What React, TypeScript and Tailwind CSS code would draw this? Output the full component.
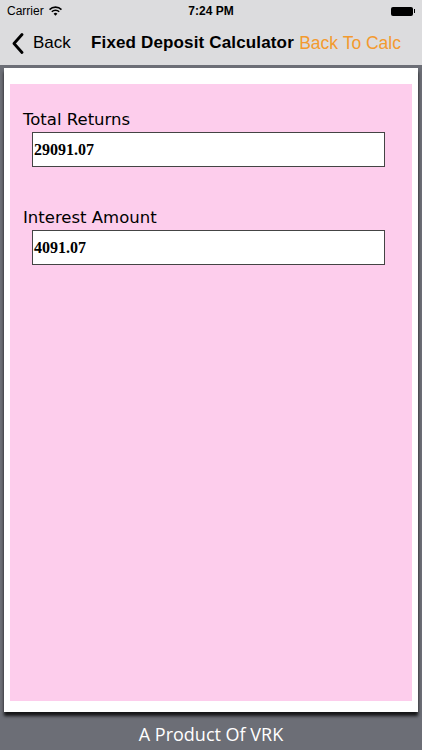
export default function App() {
  return (
    <div className="w-[422px] h-[750px] flex flex-col bg-[#6c6e76] overflow-hidden" style={{ fontFamily: "'Liberation Sans', Arial, sans-serif" }}>
      {/* Status bar + nav */}
      <div className="bg-[#dcdcde] h-[65px] flex flex-col">
        <div className="h-[22px] relative flex items-center px-[7px] text-[12px] text-black">
          <div className="flex items-center gap-[5px]">
            <span>Carrier</span>
            <svg width="13" height="10" viewBox="0 0 13 10">
              <path d="M0.5 3.6 A8.5 8.5 0 0 1 12.5 3.6" fill="none" stroke="#000" strokeWidth="1.6" />
              <path d="M2.8 5.8 A5.2 5.2 0 0 1 10.2 5.8" fill="none" stroke="#000" strokeWidth="1.6" />
              <path d="M4.6 7.8 L6.5 9.8 L8.4 7.8 A2.7 2.7 0 0 0 4.6 7.8 Z" fill="#000" />
            </svg>
          </div>
          <span className="absolute left-0 right-0 text-center font-bold pointer-events-none">7:24 PM</span>
          <div className="ml-auto flex items-center">
            <div className="w-[22px] h-[9px] bg-black rounded-[2px]" />
            <div className="w-[1.5px] h-[4px] bg-black ml-[1px]" />
          </div>
        </div>
        <div className="flex-1 flex items-center text-[17px] pb-[1px]">
          <div className="flex items-center pl-[12px] gap-[9px] w-[88px]">
            <svg width="12" height="21" viewBox="0 0 12 21">
              <path d="M10 1.5 L2 10.5 L10 19.5" fill="none" stroke="#000" strokeWidth="2.8" strokeLinecap="round" strokeLinejoin="round" />
            </svg>
            <span className="text-black">Back</span>
          </div>
          <span className="font-bold text-black ml-[3px] text-[17px] tracking-[0.15px]">Fixed Deposit Calculator</span>
          <span className="ml-auto mr-[21px] text-[#f39a2e] text-[17.5px]">Back To Calc</span>
        </div>
      </div>

      {/* Card */}
      <div className="mt-[3px] mx-[4px] h-[644px] bg-white px-[6px] pt-[16px] pb-[11px] shadow-[0_4px_3px_rgba(0,0,0,0.8)]">
        <div className="h-full bg-[#fdcdec] pt-[26px] pl-[13px] pr-[27px]">
          <div className="text-black leading-[20px]" style={{ fontFamily: "'DejaVu Sans', sans-serif", fontSize: "16.5px" }}>
            Total Returns
          </div>
          <div className="mt-[2px] ml-[9px] h-[35px] bg-white border border-[#444] flex items-center px-[1px] font-bold text-[16px] text-black" style={{ fontFamily: "'Liberation Serif', 'Times New Roman', serif" }}>
            29091.07
          </div>
          <div className="mt-[41px] text-black leading-[20px]" style={{ fontFamily: "'DejaVu Sans', sans-serif", fontSize: "16.5px" }}>
            Interest Amount
          </div>
          <div className="mt-[2px] ml-[9px] h-[35px] bg-white border border-[#444] flex items-center px-[1px] font-bold text-[16px] text-black" style={{ fontFamily: "'Liberation Serif', 'Times New Roman', serif" }}>
            4091.07
          </div>
        </div>
      </div>

      {/* Footer */}
      <div className="flex-1 flex items-center justify-center pt-[6px] text-white text-[18px]" style={{ fontFamily: "'Open Sans', sans-serif" }}>
        A Product Of VRK
      </div>
    </div>
  );
}
